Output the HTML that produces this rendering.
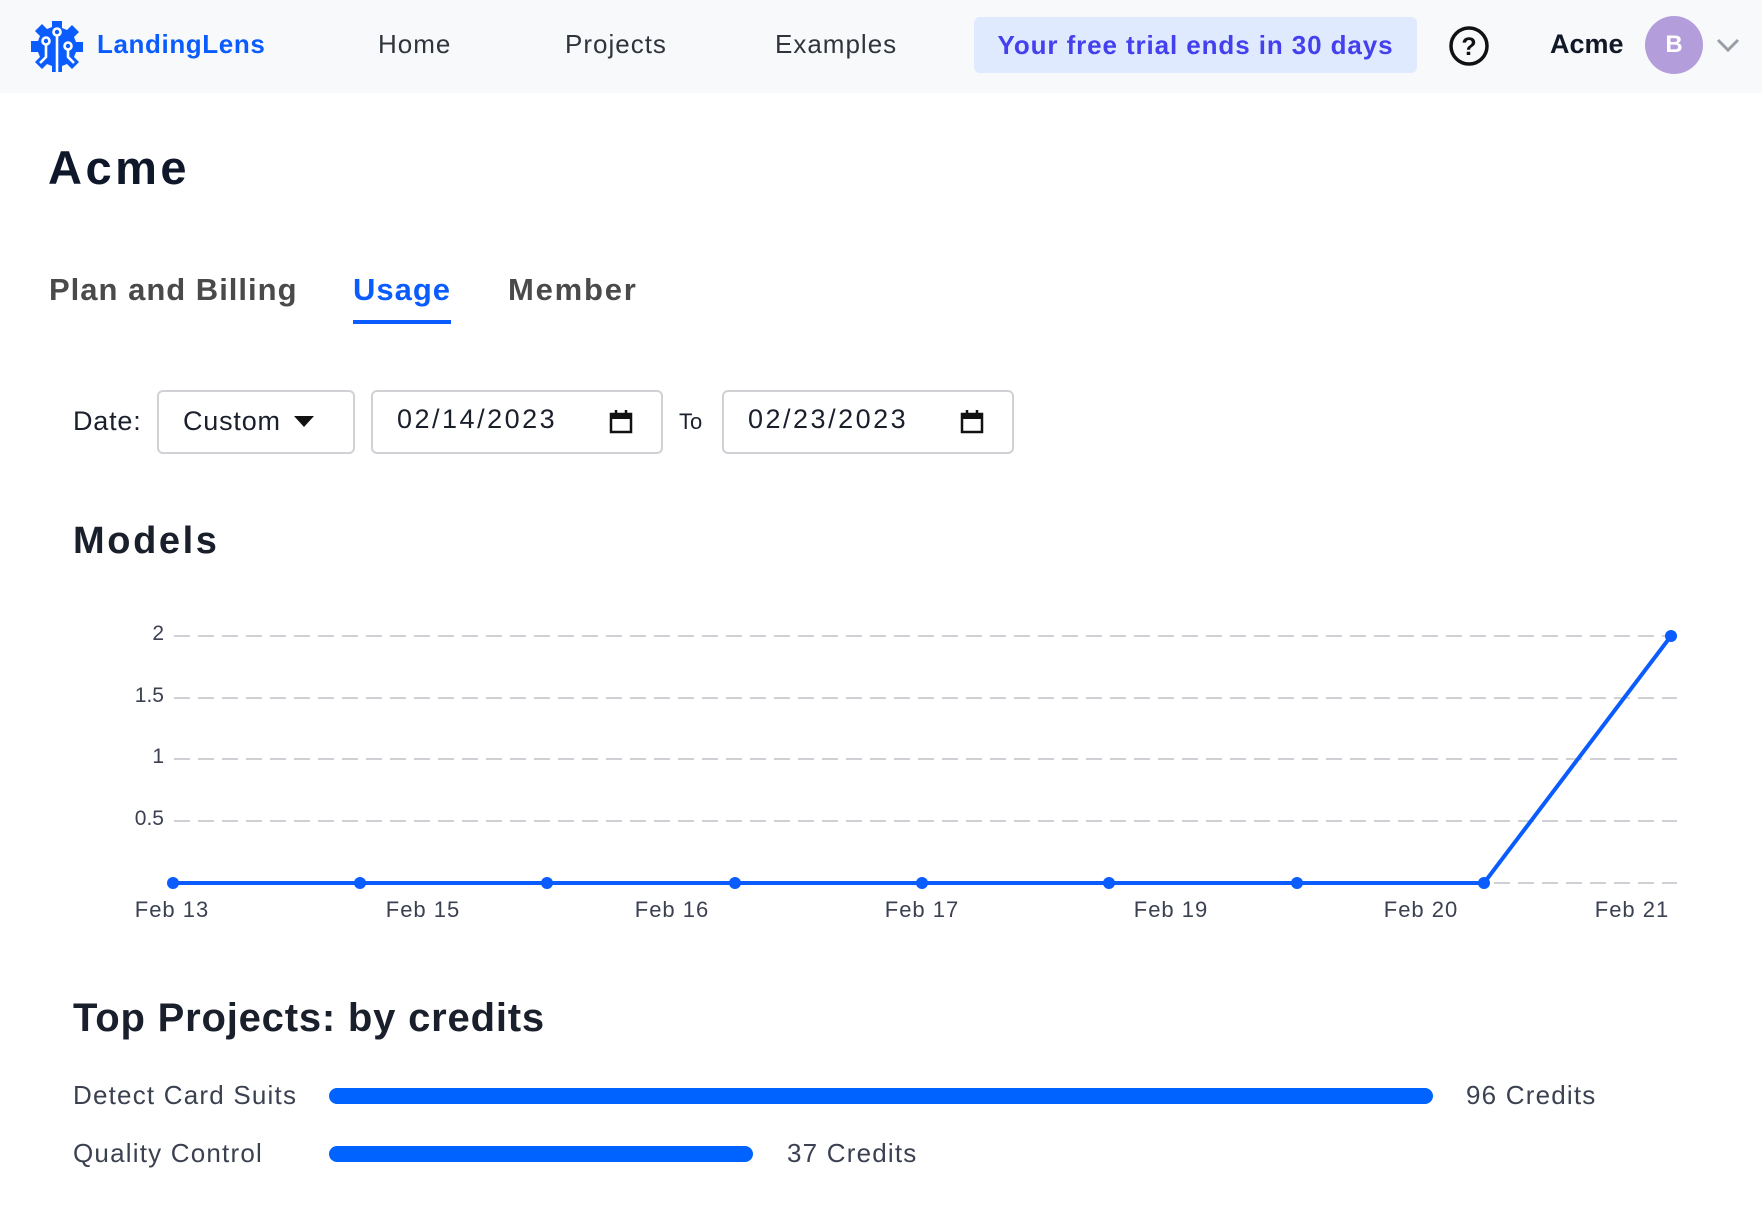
<!DOCTYPE html>
<html><head><meta charset="utf-8"><style>
*{margin:0;padding:0;box-sizing:border-box}
body{width:1762px;height:1210px;background:#fff;font-family:"Liberation Sans",sans-serif;position:relative;overflow:hidden;color:#1f2937}
.a{position:absolute;white-space:nowrap}
.hdr{position:absolute;left:0;top:0;width:1762px;height:93px;background:#f8f9fb}
.nav{font-size:26px;color:#30343c;top:29px;letter-spacing:1px}
.box{position:absolute;border:2px solid #cfd1d4;border-radius:6px;background:#fff}
.in{font-size:27px;color:#1a1f2c;letter-spacing:.8px}
.dt{letter-spacing:2.5px}
.yl{font-size:21px;color:#3b4150;text-align:right;width:60px}
.xl{font-size:22px;color:#3b4150;top:897px;transform:translateX(-50%);letter-spacing:1px}
.bl{font-size:26px;color:#3b4150;letter-spacing:1.2px}
</style></head><body>
<div class="hdr"></div>
<svg class="a" style="left:31px;top:20px" width="52" height="52" viewBox="0 0 52 52">
<path fill="#0a5cff" d="M21 1h10v7l5 2 5-5 7 7-5 5 2 5h7v10h-7l-2 5 5 5-7 7-5-5-5 2v7H21v-7l-5-2-5 5-7-7 5-5-2-5H0V21h7l2-5-5-5 7-7 5 5 5-2z"/>
<g stroke="#fff" stroke-width="2.6" fill="none"><circle cx="26" cy="12" r="3.5"/><path d="M26 16v36"/><circle cx="15" cy="21" r="3.5"/><path d="M15 25v12l-6 6"/><circle cx="37" cy="26" r="3.5"/><path d="M37 30v7l6 6"/></g>
</svg>
<div class="a" style="left:97px;top:29px;font-size:26px;font-weight:bold;color:#0a5cff;letter-spacing:.6px">LandingLens</div>
<div class="a nav" style="left:378px">Home</div>
<div class="a nav" style="left:565px">Projects</div>
<div class="a nav" style="left:775px">Examples</div>
<div class="a" style="left:974px;top:17px;width:443px;height:56px;background:#dfeafe;border-radius:6px;color:#4540ee;font-size:26px;font-weight:bold;line-height:56px;text-align:center;letter-spacing:.9px">Your free trial ends in 30 days</div>
<svg class="a" style="left:1447px;top:24px" width="44" height="44" viewBox="0 0 44 44"><circle cx="22" cy="22" r="18" fill="none" stroke="#111" stroke-width="3.5"/><text x="22" y="31" font-size="25" font-weight="bold" text-anchor="middle" font-family="Liberation Sans" fill="#111">?</text></svg>
<div class="a" style="left:1550px;top:29px;font-size:27px;font-weight:bold;color:#111827">Acme</div>
<div class="a" style="left:1645px;top:16px;width:58px;height:58px;border-radius:50%;background:#b39ddb;color:#fff;font-size:24px;font-weight:bold;line-height:58px;text-align:center">B</div>
<svg class="a" style="left:1715px;top:36px" width="26" height="18"><path d="M3 4l10 10 10-10" stroke="#9a9ea6" stroke-width="3" fill="none"/></svg>

<div class="a" style="left:48px;top:140px;font-size:47px;font-weight:bold;color:#0f172a;letter-spacing:3.5px">Acme</div>
<div class="a" style="left:49px;top:272px;font-size:31px;font-weight:bold;color:#4a4a4a;letter-spacing:1px">Plan and Billing</div>
<div class="a" style="left:353px;top:272px;font-size:31px;font-weight:bold;color:#0a5cff;letter-spacing:1px">Usage</div>
<div class="a" style="left:353px;top:320px;width:98px;height:4px;background:#0a5cff"></div>
<div class="a" style="left:508px;top:272px;font-size:31px;font-weight:bold;color:#4a4a4a;letter-spacing:1.8px">Member</div>

<div class="a in" style="left:73px;top:406px">Date:</div>
<div class="box" style="left:157px;top:390px;width:198px;height:64px"></div>
<div class="a in" style="left:183px;top:406px">Custom</div>
<svg class="a" style="left:294px;top:416px" width="20" height="12"><path d="M0 0h20L10 11z" fill="#111"/></svg>
<div class="box" style="left:371px;top:390px;width:292px;height:64px"></div>
<div class="a in dt" style="left:397px;top:404px">02/14/2023</div>
<svg class="a" style="left:609px;top:409px" width="24" height="26"><rect x="2" y="5" width="20" height="18" fill="none" stroke="#111" stroke-width="2.5"/><rect x="2" y="5" width="20" height="5" fill="#111"/><path d="M7 1v5M17 1v5" stroke="#111" stroke-width="2.5"/></svg>
<div class="a" style="left:679px;top:409px;font-size:22px;color:#1a1f2c">To</div>
<div class="box" style="left:722px;top:390px;width:292px;height:64px"></div>
<div class="a in dt" style="left:748px;top:404px">02/23/2023</div>
<svg class="a" style="left:960px;top:409px" width="24" height="26"><rect x="2" y="5" width="20" height="18" fill="none" stroke="#111" stroke-width="2.5"/><rect x="2" y="5" width="20" height="5" fill="#111"/><path d="M7 1v5M17 1v5" stroke="#111" stroke-width="2.5"/></svg>

<div class="a" style="left:73px;top:520px;font-size:38px;font-weight:bold;color:#1a1f2c;letter-spacing:2.6px">Models</div>

<svg class="a" style="left:0;top:0" width="1762" height="1000">
<g stroke="#d0d1d4" stroke-width="2" stroke-dasharray="16 8"><path d="M174 636H1677M174 698H1677M174 759H1677M174 821H1677M174 883H1677"/></g>
<polyline points="173,883 1484,883 1671,636" fill="none" stroke="#0a5cff" stroke-width="4"/>
<g fill="#0a5cff"><circle cx="173" cy="883" r="6"/><circle cx="360" cy="883" r="6"/><circle cx="547" cy="883" r="6"/><circle cx="735" cy="883" r="6"/><circle cx="922" cy="883" r="6"/><circle cx="1109" cy="883" r="6"/><circle cx="1297" cy="883" r="6"/><circle cx="1484" cy="883" r="6"/><circle cx="1671" cy="636" r="6"/></g>
</svg>
<div class="a yl" style="left:104px;top:622px">2</div>
<div class="a yl" style="left:104px;top:684px">1.5</div>
<div class="a yl" style="left:104px;top:745px">1</div>
<div class="a yl" style="left:104px;top:807px">0.5</div>
<div class="a xl" style="left:172px">Feb 13</div>
<div class="a xl" style="left:423px">Feb 15</div>
<div class="a xl" style="left:672px">Feb 16</div>
<div class="a xl" style="left:922px">Feb 17</div>
<div class="a xl" style="left:1171px">Feb 19</div>
<div class="a xl" style="left:1421px">Feb 20</div>
<div class="a xl" style="left:1632px">Feb 21</div>

<div class="a" style="left:73px;top:996px;font-size:40px;font-weight:bold;color:#1a1f2c;letter-spacing:.8px">Top Projects: by credits</div>
<div class="a bl" style="left:73px;top:1080px">Detect Card Suits</div>
<div class="a" style="left:329px;top:1088px;width:1104px;height:16px;border-radius:8px;background:#0062ff"></div>
<div class="a bl" style="left:1466px;top:1080px">96 Credits</div>
<div class="a bl" style="left:73px;top:1138px">Quality Control</div>
<div class="a" style="left:329px;top:1146px;width:424px;height:16px;border-radius:8px;background:#0062ff"></div>
<div class="a bl" style="left:787px;top:1138px">37 Credits</div>
</body></html>
